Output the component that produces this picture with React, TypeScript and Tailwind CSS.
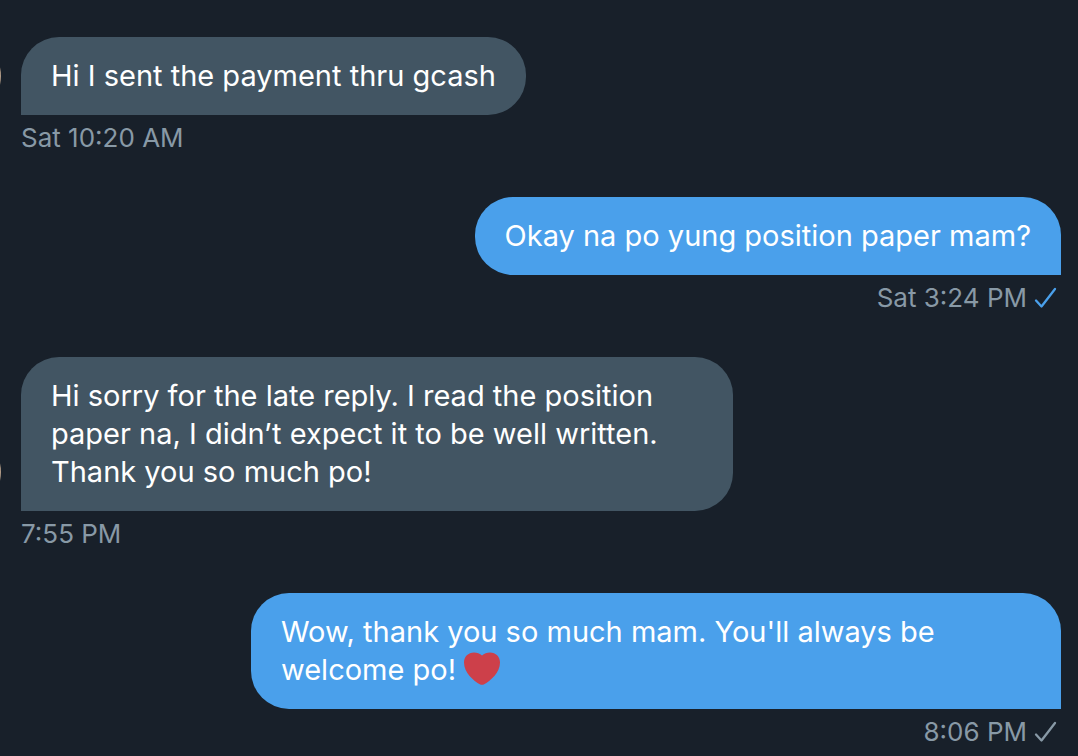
import React from 'react';

type Message = {
  id: number;
  text: string;
  time: string;
  sent: boolean;
  seen?: boolean;
  heart?: boolean;
};

const messages: Message[] = [
  { id: 1, text: 'Hi I sent the payment thru gcash', time: 'Sat 10:20 AM', sent: false },
  { id: 2, text: 'Okay na po yung position paper mam?', time: 'Sat 3:24 PM', sent: true, seen: true },
  {
    id: 3,
    text: 'Hi sorry for the late reply. I read the position paper na, I didn’t expect it to be well written. Thank you so much po!',
    time: '7:55 PM',
    sent: false,
  },
  {
    id: 4,
    text: "Wow, thank you so much mam. You'll always be welcome po!",
    time: '8:06 PM',
    sent: true,
    seen: false,
    heart: true,
  },
];

const Heart = () => (
  <svg viewBox="0 0 36 36" className="-mt-2 ml-2 inline-block h-9 w-9 align-[-7px]" role="img" aria-label="Red heart">
    <path
      fill="#cd404a"
      d="M18 4.500C20 2.700 23 1.500 26 1.500C31.800 1.500 36 5.700 36 11.500C36 21.500 26.500 30 19.800 33.400Q18 34.200 16.200 33.400C9.500 30 0 21.500 0 11.500C0 5.700 4.200 1.500 10 1.500C13 1.500 16 2.700 18 4.500Z"
    />
  </svg>
);

const Check = ({ seen }: { seen?: boolean }) => (
  <svg
    viewBox="0 0 24 24"
    className={`h-6 w-6 ${seen ? 'text-[#4aa0eb]' : 'text-[#8899a6]'}`}
    fill="none"
    role="img"
    aria-label={seen ? 'Seen' : 'Sent'}
  >
    <path d="M3 14.500L8.500 20.500L22 3" stroke="currentColor" strokeWidth="2.3" strokeLinecap="round" strokeLinejoin="round" />
  </svg>
);

const ReceivedMessage = ({ message }: { message: Message }) => (
  <article>
    <div className="flex items-end gap-5">
      {/* Avatar is pushed past the left edge, only its rim shows */}
      <div className="-ml-[77px] h-[78px] w-[78px] shrink-0 rounded-full bg-[#b39c88]" />
      <p className="max-w-[712px] rounded-[38px] rounded-bl-none bg-[#425563] px-[30px] py-5">{message.text}</p>
    </div>
    <div className="flex h-[46px] items-center pl-[21px] text-[26px] text-[#8899a6]">
      <time>{message.time}</time>
    </div>
  </article>
);

const SentMessage = ({ message }: { message: Message }) => (
  <article className="flex flex-col items-end pr-[17px] pl-5">
    <p className="max-w-[810px] rounded-[38px] rounded-br-none bg-[#4aa0eb] px-[30px] py-5">
      {message.text}
      {message.heart && <Heart />}
    </p>
    <div className="flex h-[46px] items-center gap-1.5 pr-1 text-[26px] text-[#8899a6]">
      <time>{message.time}</time>
      <Check seen={message.seen} />
    </div>
  </article>
);

export default function App() {
  return (
    <main className="flex min-h-screen flex-col gap-9 overflow-hidden bg-[#18202a] pt-[37px] font-['Inter',sans-serif] text-[29px] leading-[38px] text-white">
      {messages.map((message) =>
        message.sent ? (
          <SentMessage key={message.id} message={message} />
        ) : (
          <ReceivedMessage key={message.id} message={message} />
        )
      )}
    </main>
  );
}
